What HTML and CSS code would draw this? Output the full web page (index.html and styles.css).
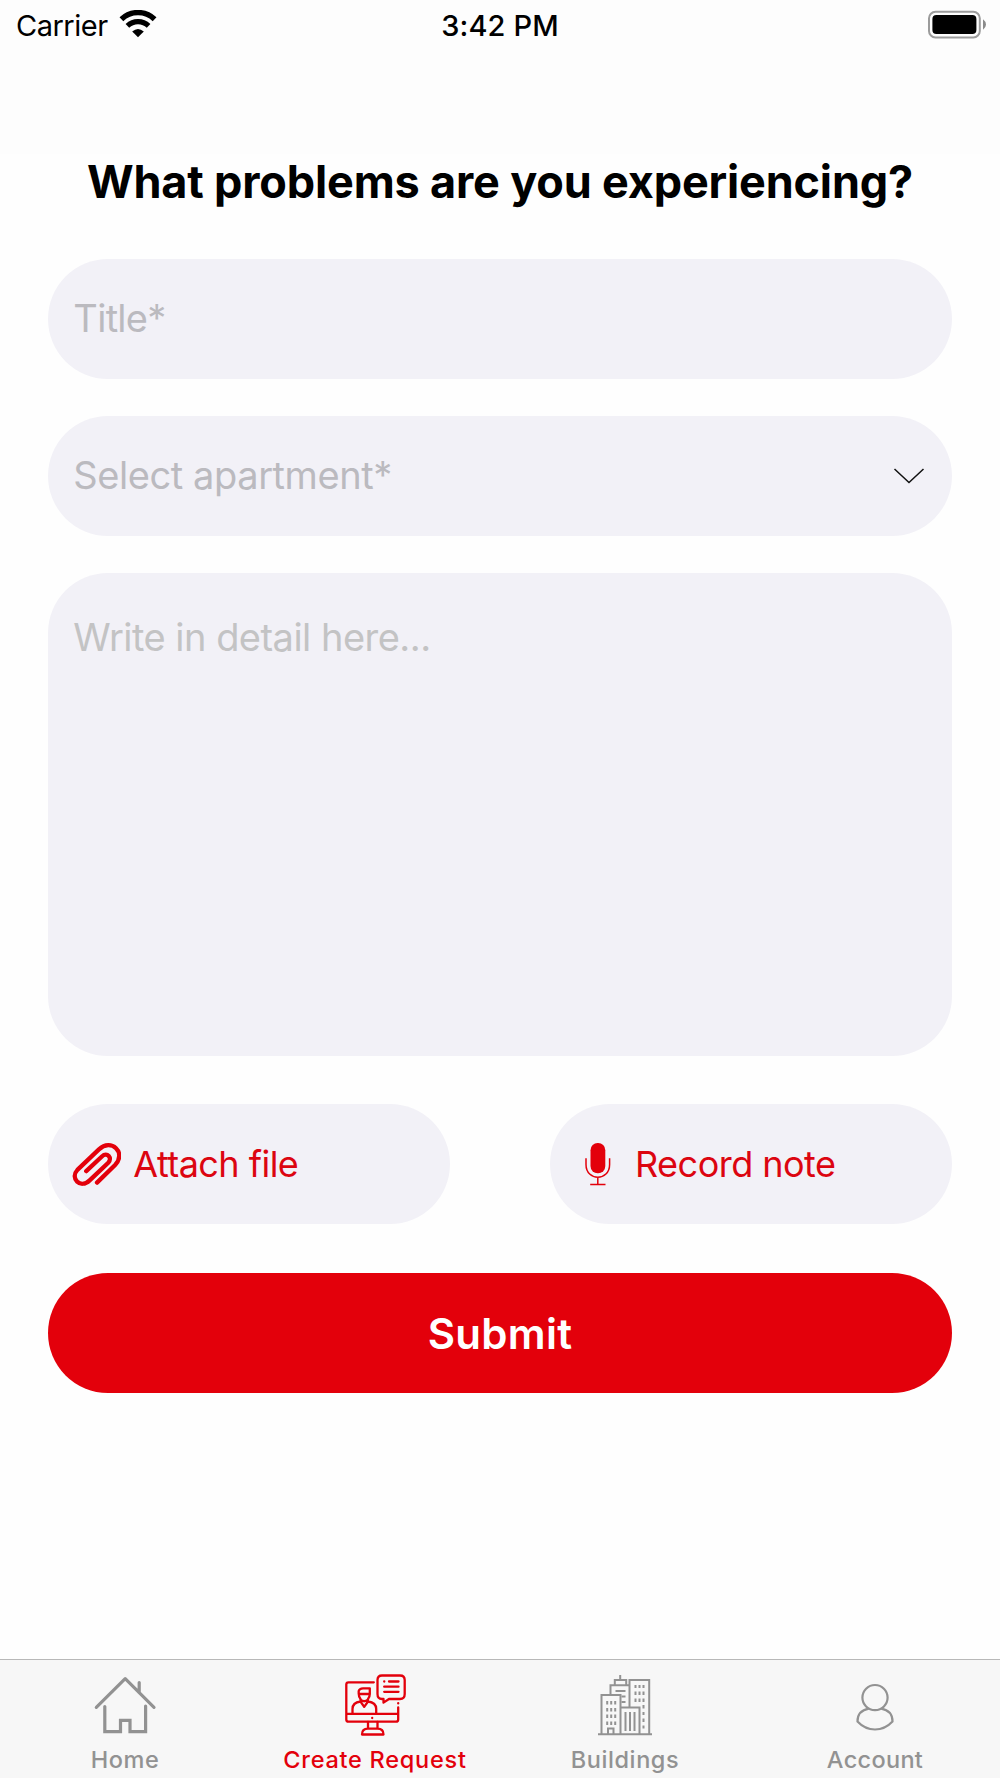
FILE: index.html
```html
<!DOCTYPE html>
<html lang="en">
<head>
<meta charset="utf-8">
<title>Create Request</title>
<link rel="stylesheet" href="styles.css">
</head>
<body>
<div class="screen">
  <header class="status-bar">
    <div class="status-left">
      <span class="carrier">Carrier</span>
      <svg class="wifi" viewBox="0 0 38 28" width="38" height="28" fill="none" stroke="#000">
        <path d="M2.4 9.2A24 24 0 0 1 35.6 9.2" stroke-width="5.4"/>
        <path d="M8.4 15.9A15.3 15.3 0 0 1 29.6 15.9" stroke-width="5.2"/>
        <path d="M13.2 21.4Q19 16.4 24.8 21.4L19 27.2Z" fill="#000" stroke="none"/>
      </svg>
    </div>
    <span class="clock">3:42 PM</span>
    <div class="status-right">
      <svg class="battery" viewBox="0 0 60 32" width="60" height="32">
        <rect x="2" y="1.8" width="50.8" height="25.6" rx="6.5" fill="none" stroke="#9b9b9b" stroke-width="2"/>
        <rect x="5.4" y="5" width="44" height="19" rx="4" fill="#000"/>
        <path d="M56 9.2Q59 11.5 59 14.5Q59 17.5 56 19.8Z" fill="#8a8a8a"/>
      </svg>
    </div>
  </header>

  <main class="content">
    <h1 class="heading">What problems are you experiencing?</h1>
    <div class="field"><span class="placeholder ph-title">Title*</span></div>
    <div class="field">
      <span class="placeholder ph-select">Select apartment*</span>
      <svg class="chevron" viewBox="0 0 32 18" width="32" height="18" fill="none" stroke="#111" stroke-width="1.5"><path d="M1.5 2L16 15.500L30.500 2"/></svg>
    </div>
    <div class="field field-detail"><span class="placeholder ph-detail">Write in detail here...</span></div>
    <div class="actions">
      <button class="action" type="button">
        <svg class="clip" viewBox="0 0 50 46" width="49" height="45" fill="none" stroke="#e3000b" stroke-width="4.4" stroke-linecap="round">
          <path d="M14.5 29.8L30.5 14.8C36 9.7 41.5 16.5 37 21.2L18 39.2C8.500 48.500 -2.500 37 5.500 28.500L27.500 7.500C40 -4.500 56 11 44 23.500L25.500 41.500"/>
        </svg>
        <span class="lb-attach">Attach file</span>
      </button>
      <button class="action" type="button">
        <svg class="mic" viewBox="0 0 26 44" width="26" height="44">
          <rect x="5.5" y="1" width="14.8" height="30.3" rx="7.2" fill="#e3000b"/>
          <path d="M1 16.300V22.500C1 39.500 24.600 39.500 24.600 22.500V16.300M12.800 35.200V42M5.200 42.400H20.500" fill="none" stroke="#e3000b" stroke-width="1.5"/>
        </svg>
        <span class="lb-record">Record note</span>
      </button>
    </div>
    <button class="submit" type="button">Submit</button>
  </main>

  <nav class="tabs">
    <a class="tab">
      <svg class="tab-icon" viewBox="0 0 64 64" width="64" height="64" fill="none" stroke="#929292" stroke-width="3.2" stroke-linecap="round" stroke-linejoin="round">
        <path d="M3.300 34.300L32.200 5.600L61 34.300M46.200 19V9.500"/>
        <path d="M11.800 33.500V58.700H27.500V47.300H37V58.700H52.600V33" stroke-linejoin="miter"/>
      </svg>
      <span class="lb-home">Home</span>
    </a>
    <a class="tab active">
      <svg class="tab-icon" viewBox="0 0 64 64" width="64" height="64" fill="none" stroke="#e3000b" stroke-width="2.3" stroke-linecap="round" stroke-linejoin="round">
        <path d="M30.800 9.300H5.500Q3.300 9.300 3.300 11.500V46.500Q3.300 48.700 5.500 48.700H53Q55.200 48.700 55.200 46.500V34.500M55.200 30.200V30.400M3.300 40.800H55.200M29.200 45V45.100"/>
        <path d="M25 49V55.500M34.500 49V55.500M19 61.500Q19 55.700 25 55.700H34.500Q40.500 55.700 40.500 61.500Z"/>
        <path d="M9.500 40.500V36Q9.500 29.500 17.500 28.500L21.200 33.800L25 28.500Q33.200 29.500 33.200 36V40.500M17.500 28.500V26Q15.700 24 15.700 20.500V18Q16.500 15.300 20 15.300H26.800V21Q26.800 24 25 26V28.500M16 21H26.500M17.500 26.500Q21 30 25 26.500"/>
        <path d="M39 2.500H57Q61.700 2.500 61.700 7V21Q61.700 26 57 26H46L40.500 29.600V26H39Q34.500 26 34.500 21V7Q34.500 2.500 39 2.500Z"/>
        <path d="M41.200 8.500H41.300M46 8.500H55.500M41.200 13.700H55.500M41.200 18.800H55.500"/>
      </svg>
      <span class="lb-create">Create Request</span>
    </a>
    <a class="tab">
      <svg class="tab-icon" viewBox="0 0 64 64" width="64" height="64" fill="none" stroke="#929292" stroke-width="2">
        <path d="M5 61.300H59M8.500 61V22H27.500V34M17.500 21.500V12.300H37M21.800 12V7H33.200V12M27.200 6.500V2M36.500 34V7H56.200V61M27.500 61V34.500H46.500V61M15 61V55.500H20.500V61"/>
        <path d="M22.500 18H32.500M28.500 23.500H32.500M28.500 29H32.500M32.500 39V58M37 39V58M41.500 39V58"/>
        <path d="M14.200 28V31.500M18.200 28V31.500M22.200 28V31.500M14.200 35V38.500M18.200 35V38.500M22.200 35V38.500M14.200 41.500V45M18.200 41.500V45M22.200 41.500V45M14.200 48.500V52M18.200 48.500V52M22.200 48.500V52M42.500 12V15M46.500 12V15M50.500 12V15M42.500 18.500V22M46.500 18.500V22M50.500 18.500V22M42.500 25.500V29M46.500 25.500V29M50.500 25.500V29M50.500 32V35.500M50.500 39V42M50.500 45.500V49M50.500 52.500V55.500"/>
      </svg>
      <span class="lb-build">Buildings</span>
    </a>
    <a class="tab">
      <svg class="tab-icon account-icon" viewBox="0 0 64 64" width="64" height="64" fill="none" stroke="#929292" stroke-width="2.2">
        <circle cx="32" cy="23.600" r="12.600"/>
        <path d="M25.800 34.700C18 36 14.500 40 14.500 47.500Q22 55.500 32 55.500Q42 55.500 49.500 47.500C49.500 40 46 36 38.200 34.700"/>
      </svg>
      <span class="lb-account">Account</span>
    </a>
  </nav>
</div>
</body>
</html>
```
FILE: styles.css
```css
* { box-sizing: border-box; }
body { margin: 0; background: #fff; font-family: Inter, "Liberation Sans", sans-serif; color: #000; }
.screen { width: 1000px; height: 1778px; display: flex; flex-direction: column; background: #fefefe; overflow: hidden; }

.status-bar { height: 154px; flex: none; background: #fdfdfd; display: grid; grid-template-columns: 1fr auto 1fr; align-items: start; padding: 8px 13px 0; line-height: 35px; font-size: 29px; }
.status-left { display: flex; gap: 11px; padding-left: 3px; }
.carrier { letter-spacing: -0.5px; }
.clock { font-weight: 500; letter-spacing: 0.13px; }
.status-right { display: flex; justify-content: flex-end; padding-top: 2px; }
.wifi { margin-top: 2px; }

.content { flex: 1; padding: 0 48.3px; display: flex; flex-direction: column; }
.heading { margin: 0; height: 104.7px; text-align: center; font-size: 45px; font-weight: 700; letter-spacing: -0.17px; line-height: 56px; white-space: nowrap; }

.field { background: #f2f1f7; border-radius: 60px; height: 120.5px; padding: 0 27px 0 25px; display: flex; align-items: center; justify-content: space-between; margin-bottom: 36.5px; flex: none; }
.placeholder { font-size: 38px; line-height: 46px; color: #bbbabf; padding-bottom: 2px; }
.ph-title { letter-spacing: -0.7px; }
.ph-select { letter-spacing: -0.42px; }
.field-detail { height: 483px; align-items: flex-start; padding-top: 41px; margin-bottom: 48.3px; }
.ph-detail { color: #c3c3c4; letter-spacing: -0.52px; }

.actions { display: grid; grid-template-columns: 1fr 1fr; gap: 100px; margin-bottom: 48.5px; }
.action { height: 120.5px; border: 0; border-radius: 60px; background: #f2f1f7; display: flex; align-items: center; font: 400 36px/44px Inter, sans-serif; color: #dc0510; padding: 0 24px; }
.clip { margin-right: 12px; }
.mic { margin: 0 24px 0 11px; }
.lb-attach { letter-spacing: -0.54px; }
.lb-record { letter-spacing: -0.52px; }
.submit { height: 120.5px; flex: none; border: 0; border-radius: 60px; background: #e3000b; color: #fff; font: 600 42px/50px Inter, sans-serif; letter-spacing: 0.29px; padding-top: 2px; }

.tabs { height: 119px; flex: none; border-top: 1px solid #b8b8b8; background: #f7f7f7; display: grid; grid-template-columns: repeat(4, 1fr); }
.tab { display: flex; flex-direction: column; align-items: center; padding-top: 13px; font-size: 23.5px; font-weight: 500; line-height: 28px; color: #929292; }
.tab-icon { margin-bottom: 9px; }
.account-icon { transform: translateY(1px); }
.lb-home { letter-spacing: 0.55px; }
.lb-create { letter-spacing: 0.75px; }
.lb-build { letter-spacing: 0.59px; }
.lb-account { letter-spacing: 0.32px; }
.active { color: #e3000b; }
```
